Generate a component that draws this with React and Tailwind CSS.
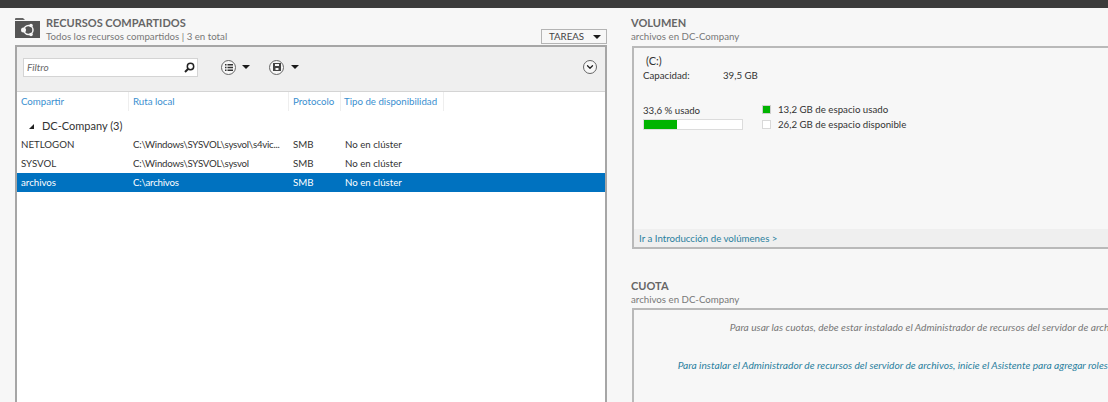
import { ChevronDown } from 'lucide-react';

const font = { fontFamily: 'Lato, "Open Sans", sans-serif' };

const rows = [
  { name: 'NETLOGON', path: 'C:\\Windows\\SYSVOL\\sysvol\\s4vic...', proto: 'SMB', avail: 'No en clúster' },
  { name: 'SYSVOL', path: 'C:\\Windows\\SYSVOL\\sysvol', proto: 'SMB', avail: 'No en clúster' },
  { name: 'archivos', path: 'C:\\archivos', proto: 'SMB', avail: 'No en clúster', selected: true },
];

function Caret() {
  return <span className="w-0 h-0 border-x-[4px] border-x-transparent border-t-[4px] border-t-[#1a1a1a]" />;
}

function FolderIcon() {
  return (
    <svg width="25" height="20" viewBox="0 0 25 20">
      <path d="M0 1a1 1 0 0 1 1-1h7l2 2H0z" fill="#666" />
      <path d="M0 3h25v17H0z" fill="#555" />
      <circle cx="13.500" cy="12" r="4.500" fill="none" stroke="#f7f7f7" strokeWidth="1.500" />
      <circle cx="8.500" cy="12" r="2.500" fill="#f7f7f7" />
      <circle cx="16" cy="7.500" r="1.800" fill="#f7f7f7" />
      <circle cx="16" cy="16.500" r="1.800" fill="#f7f7f7" />
    </svg>
  );
}

function ListIcon() {
  return (
    <span className="w-[15px] h-[15px] rounded-full border border-[#666] bg-[#f7f7f7] flex items-center justify-center">
      <svg width="8" height="7" viewBox="0 0 8 7">
        <path d="M0 0h1.500v1.400H0zM2.500 0H8v1.400H2.500zM0 2.800h1.500v1.400H0zM2.500 2.800H8v1.400H2.500zM0 5.600h1.500V7H0zM2.500 5.600H8V7H2.500z" fill="#333" />
      </svg>
    </span>
  );
}

function SaveIcon() {
  return (
    <span className="w-[15px] h-[15px] rounded-full border border-[#666] bg-[#f7f7f7] flex items-center justify-center">
      <svg width="8" height="8" viewBox="0 0 8 8">
        <path d="M0 0h8v8H0zM2 1v2h4V1zM2.500 5v2h3V5z" fill="#444" fillRule="evenodd" />
      </svg>
    </span>
  );
}

function SharesPanel() {
  return (
    <section className="w-[592px] shrink-0">
      <div className="flex h-[29px] items-start">
        <div className="mt-[2px] mr-[6px]"><FolderIcon /></div>
        <div className="flex-1 -mt-[1px]">
          <h2 className="text-[11px] leading-[15px] font-bold text-[#666]">RECURSOS COMPARTIDOS</h2>
          <p className="-mt-[1px] text-[9.700px] leading-[14px] text-[#777]">Todos los recursos compartidos | 3 en total</p>
        </div>
        <button className="mt-[13px] w-[66px] h-[15px] border border-[#b4b4b4] bg-[#f7f7f7] text-[9.700px] leading-[13px] text-[#444] flex items-center justify-between pl-[7px] pr-[5px]">
          TAREAS <Caret />
        </button>
      </div>

      <div className="h-[400px] border-2 border-[#a6a6a6] bg-white">
        <div className="h-[45px] bg-[#efefef] border-b border-[#d4d4d4] flex items-center pl-[6px] pr-[8px] pb-[4px]">
          <div className="w-[175px] h-[19px] bg-white border border-[#d4d4d4] flex items-center justify-between pl-[3px] pr-[2px]">
            <span className="text-[10px] italic text-[#666]">Filtro</span>
            <svg width="11" height="11" viewBox="0 0 11 11">
              <circle cx="6.500" cy="4.500" r="3.200" fill="none" stroke="#222" strokeWidth="1.500" />
              <path d="M4 7 1 10" stroke="#222" strokeWidth="2" />
            </svg>
          </div>
          <div className="ml-[23px] flex items-center gap-[6px]"><ListIcon /><Caret /></div>
          <div className="ml-[19px] flex items-center gap-[7px]"><SaveIcon /><Caret /></div>
          <span className="ml-auto w-[14px] h-[14px] rounded-full border border-[#666] bg-[#f7f7f7] flex items-center justify-center">
            <ChevronDown size={10} strokeWidth={3} className="text-[#222]" />
          </span>
        </div>

        <div className="flex h-[19px] text-[9.700px] leading-[19px] text-[#3a8fd0]">
          <div className="w-[112px] pl-[4px] border-r border-[#eeeeee]">Compartir</div>
          <div className="w-[160px] pl-[4px] border-r border-[#eeeeee]">Ruta local</div>
          <div className="w-[52px] pl-[4px] border-r border-[#eeeeee]">Protocolo</div>
          <div className="w-[103px] pl-[3px] border-r border-[#eeeeee] whitespace-nowrap">Tipo de disponibilidad</div>
        </div>

        <div className="h-[23px] flex items-end pl-[12px] text-[11px] leading-[16px] text-[#333]">
          <span className="w-0 h-0 border-l-[5px] border-l-transparent border-b-[5px] border-b-[#222] mr-[8px] mb-[5px]" />
          DC-Company (3)
        </div>

        {rows.map((r) => (
          <div
            key={r.name}
            className={`flex h-[19.300px] text-[9.700px] ${r.selected ? 'leading-[18px] bg-[#0072c0] text-white' : 'leading-[20px] text-[#333]'}`}
          >
            <div className="w-[112px] pl-[4px]">{r.name}</div>
            <div className="w-[160px] pl-[4px] whitespace-nowrap tracking-[-0.25px]">{r.path}</div>
            <div className="w-[52px] pl-[4px]">{r.proto}</div>
            <div className="pl-[4px]">{r.avail}</div>
          </div>
        ))}
      </div>
    </section>
  );
}

function VolumePanel() {
  return (
    <section>
      <h2 className="-ml-[1px] -mt-[1px] text-[11px] leading-[15px] font-bold text-[#666]">VOLUMEN</h2>
      <p className="-ml-[1px] -mt-[1px] text-[9.700px] leading-[14px] text-[#777]">archivos en DC-Company</p>
      <div className="h-[203px] mt-[3px] border-2 border-[#b9b9b9] border-r-0 flex flex-col">
        <div className="flex-1 pl-[9px] text-[#333]">
          <p className="pl-[3px] pt-[5px] text-[11px] leading-[16px]">(C:)</p>
          <div className="flex text-[9.700px] leading-[14px] -mt-[1px]">
            <span className="w-[80px]">Capacidad:</span>
            <span>39,5 GB</span>
          </div>
          <div className="flex mt-[21px]">
            <div className="w-[119px]">
              <p className="text-[9.700px] leading-[14px]">33,6 % usado</p>
              <div className="w-[100px] h-[11px] mt-[2px] bg-white border border-[#dcdcdc]">
                <div className="h-full bg-[#00b400]" style={{ width: '33.6%' }} />
              </div>
            </div>
            <div className="-mt-[1px] text-[9.700px] leading-[15px]">
              <div className="flex items-center">
                <span className="w-[9px] h-[9px] bg-[#00b400] border border-[#cfcfcf] mr-[7px]" />
                13,2 GB de espacio usado
              </div>
              <div className="flex items-center">
                <span className="w-[9px] h-[9px] bg-white border border-[#d8d8d8] mr-[7px]" />
                26,2 GB de espacio disponible
              </div>
            </div>
          </div>
        </div>
        <div className="h-[18px] bg-[#efefef] pl-[5px] text-[9.700px] leading-[18px] text-[#2a7f9e]">Ir a Introducción de volúmenes &gt;</div>
      </div>
    </section>
  );
}

function QuotaPanel() {
  return (
    <section className="mt-[29px]">
      <h2 className="-ml-[1px] text-[11px] leading-[15px] font-bold text-[#666]">CUOTA</h2>
      <p className="-ml-[1px] -mt-[1px] text-[9.700px] leading-[14px] text-[#777]">archivos en DC-Company</p>
      <div className="h-[120px] mt-[2px] border-2 border-[#b9b9b9] border-r-0 text-[10.200px] italic text-center whitespace-nowrap">
        <p className="pt-[10px] leading-[14px] text-[#777]">Para usar las cuotas, debe estar instalado el Administrador de recursos del servidor de archivos.</p>
        <p className="pt-[24px] leading-[14px] text-[#2a7f9e]">Para instalar el Administrador de recursos del servidor de archivos, inicie el Asistente para agregar roles y características.</p>
      </div>
    </section>
  );
}

export default function App() {
  return (
    <div className="w-[1108px] h-[402px] overflow-hidden bg-[#f7f7f7]" style={font}>
      <div className="h-[8px] bg-[#3c3c3c]" />
      <div className="flex pl-[15px] pt-[8px]">
        <SharesPanel />
        <div className="ml-[25px] w-[592px] shrink-0">
          <VolumePanel />
          <QuotaPanel />
        </div>
      </div>
    </div>
  );
}
